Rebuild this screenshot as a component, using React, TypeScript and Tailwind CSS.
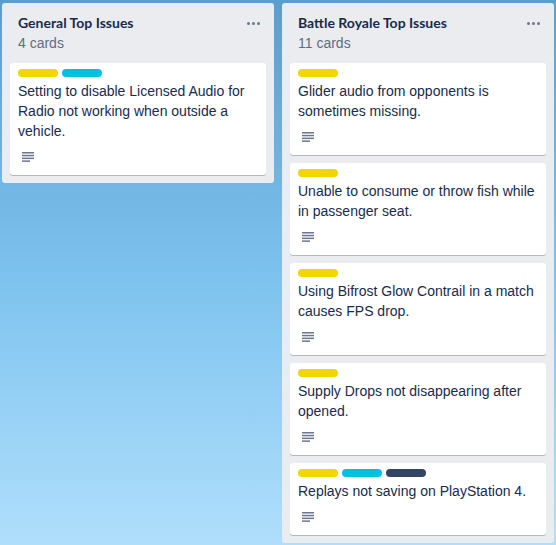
import React from "react";

type Card = { labels: string[]; text: string };

const labelColors: Record<string, string> = {
	yellow: "bg-[#f2d600]",
	sky: "bg-[#00c2e0]",
	navy: "bg-[#344563]",
};

const lists: { title: string; count: string; cards: Card[] }[] = [
	{
		title: "General Top Issues",
		count: "4 cards",
		cards: [
			{
				labels: ["yellow", "sky"],
				text: "Setting to disable Licensed Audio for Radio not working when outside a vehicle.",
			},
		],
	},
	{
		title: "Battle Royale Top Issues",
		count: "11 cards",
		cards: [
			{ labels: ["yellow"], text: "Glider audio from opponents is sometimes missing." },
			{ labels: ["yellow"], text: "Unable to consume or throw fish while in passenger seat." },
			{ labels: ["yellow"], text: "Using Bifrost Glow Contrail in a match causes FPS drop." },
			{ labels: ["yellow"], text: "Supply Drops not disappearing after opened." },
			{ labels: ["yellow", "sky", "navy"], text: "Replays not saving on PlayStation 4." },
		],
	},
];

function DescriptionIcon() {
	return (
		<svg width="12" height="10" viewBox="0 0 12 10" className="block">
			<rect x="0" y="0" width="12" height="1.5" fill="#6b778c" />
			<rect x="0" y="2.8" width="12" height="1.5" fill="#6b778c" />
			<rect x="0" y="5.6" width="12" height="1.5" fill="#6b778c" />
			<rect x="0" y="8.4" width="8" height="1.5" fill="#6b778c" />
		</svg>
	);
}

function TaskCard({ card }: { card: Card }) {
	return (
		<div className="bg-white rounded-[3px] shadow-[0_1px_0_#091e4240] pt-[6px] px-2">
			<div className="flex gap-1 mb-1">
				{card.labels.map((l, i) => (
					<span key={i} className={`block w-10 h-2 rounded-full ${labelColors[l]}`} />
				))}
			</div>
			<p className="text-sm leading-5 text-[#172b4d]">{card.text}</p>
			<div className="pt-[11px] pb-[13px] pl-1">
				<DescriptionIcon />
			</div>
		</div>
	);
}

export default function App() {
	return (
		<div
			className="min-h-[545px] h-[545px] overflow-hidden bg-gradient-to-b from-[#5a9ecf] via-[#7cc2ee] to-[#b0dffc] flex items-start gap-2 pt-[3px] px-[2px]"
			style={{ fontFamily: '"Liberation Sans", Arial, sans-serif' }}
		>
			{lists.map((list) => (
				<div key={list.title} className="w-[272px] shrink-0 bg-[#ebecf0] rounded-[3px] pb-2">
					<div className="flex items-start justify-between pl-4 pr-3 pt-[10px] pb-[10px]">
						<div>
							<h2 className="text-sm leading-5 font-bold text-[#172b4d] font-[Lato,sans-serif]">
								{list.title}
							</h2>
							<p className="text-sm leading-5 text-[#5e6c84]">{list.count}</p>
						</div>
						<div className="flex gap-[2px] mt-[9px] mr-[2px]">
							<span className="w-[3px] h-[3px] rounded-full bg-[#6b778c]" />
							<span className="w-[3px] h-[3px] rounded-full bg-[#6b778c]" />
							<span className="w-[3px] h-[3px] rounded-full bg-[#6b778c]" />
						</div>
					</div>
					<div className="flex flex-col gap-2 px-2">
						{list.cards.map((c, i) => (
							<TaskCard key={i} card={c} />
						))}
					</div>
				</div>
			))}
		</div>
	);
}
